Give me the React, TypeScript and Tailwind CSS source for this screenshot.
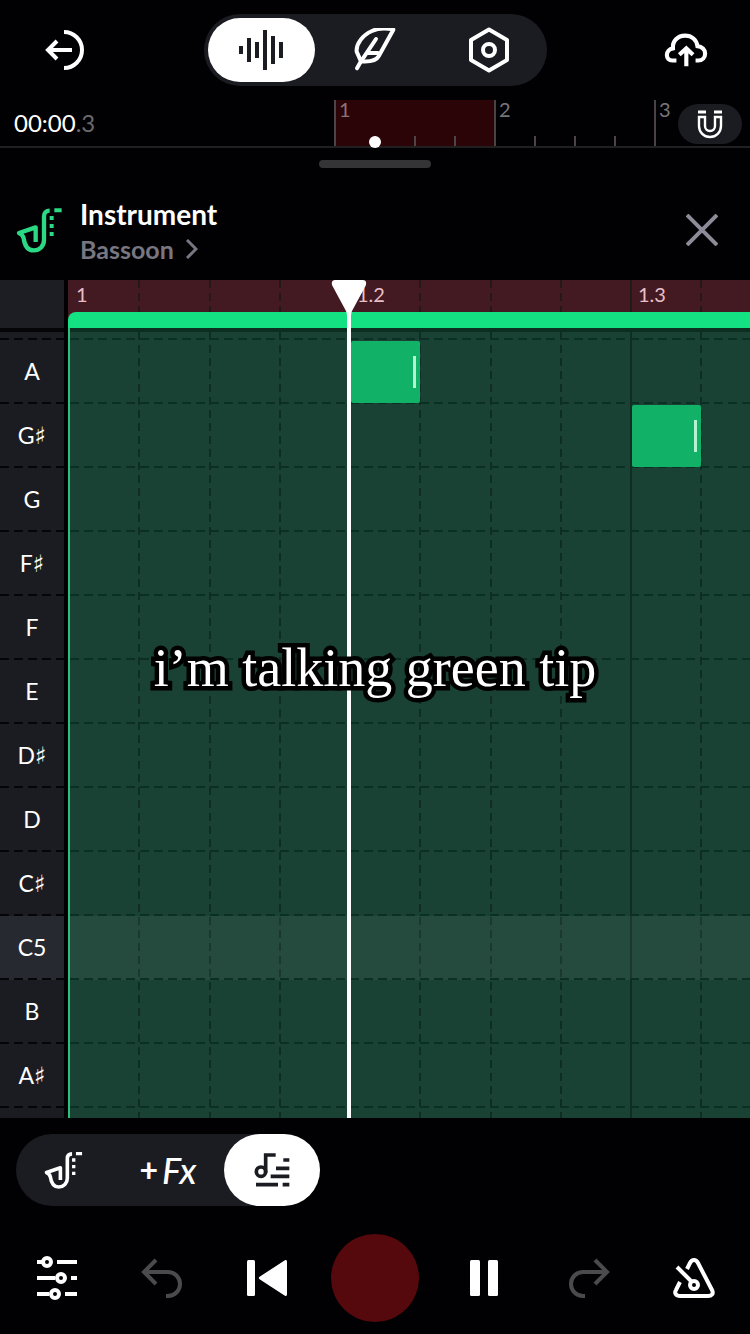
import { useState } from "react";

type Note = { beat: number };

type KeyRow = { name: string; octave?: boolean; notes?: Note[] };

const rows: KeyRow[] = [
  { name: "A", notes: [{ beat: 1 }] },
  { name: "G♯", notes: [{ beat: 2 }] },
  { name: "G" },
  { name: "F♯" },
  { name: "F" },
  { name: "E" },
  { name: "D♯" },
  { name: "D" },
  { name: "C♯" },
  { name: "C5", octave: true },
  { name: "B" },
  { name: "A♯" },
];

const BEAT_WIDTH = 281;
const beats = ["1", "1.2", "1.3"];

const keyDash =
  "h-0.5 bg-[repeating-linear-gradient(to_right,#050507_0_9px,transparent_9px_14px)]";
const laneDash =
  "h-0.5 bg-[repeating-linear-gradient(to_right,#0b2f22_0_9px,transparent_9px_14px)]";

function SaxIcon({ className }: { className?: string }) {
  return (
    <svg className={className} viewBox="18 18 144 144" fill="none" stroke="currentColor" strokeWidth="13" strokeLinejoin="round">
      <path d="M77 126V82L27 99c7 3 12 8 14 16 3 22 12 36 30 36s31-13 31-31V49c0-10 6-17 17-17" />
      <path d="M133 31h22M119 54h12M119 78h12M119 102h12" strokeWidth="12" />
    </svg>
  );
}

function WaveIcon() {
  return (
    <svg className="w-[46px] h-10" viewBox="0 0 46 40" stroke="currentColor" strokeWidth="4">
      <path d="M3 16v8M11 8v24M19 12v16M27 0v40M35 6v28M43 12v16" />
    </svg>
  );
}

function FeatherIcon() {
  return (
    <svg className="w-11 h-11" viewBox="39 39 132 132" fill="none" stroke="currentColor" strokeWidth="12" strokeLinecap="round" strokeLinejoin="round">
      <path d="M51 160l12-21" />
      <path d="M63 139L50 110c-2-24 18-50 46-62 18-8 42-9 64-4l-44 80c-7 13-27 17-53 15z" />
      <path d="M63 139l45-67M80 114h34" />
    </svg>
  );
}

function HexIcon() {
  return (
    <svg className="w-[42px] h-[46px]" viewBox="0 0 42 46" fill="none" stroke="currentColor" strokeWidth="4" strokeLinejoin="round">
      <path d="M21 2.5L39 13v20L21 43.5 3 33V13z" />
      <circle cx="21" cy="23" r="6" />
    </svg>
  );
}

function CloudIcon() {
  return (
    <svg className="w-[46px] h-9" viewBox="864 93 138 108" fill="none" stroke="currentColor" strokeWidth="13">
      <path d="M903 180h-13c-10 0-17-7-17-17 0-11 8-19 19-21-2-23 15-40 38-40 21 0 36 13 39 33 14 1 24 11 24 23 0 13-9 22-22 22h-8" />
      <path d="M934 198v-54M912 162l22-20 21 20" />
    </svg>
  );
}

function MagnetIcon() {
  return (
    <svg className="w-[26px] h-[30px]" viewBox="0 0 26 30" fill="none" stroke="currentColor" strokeWidth="2.4">
      <path d="M1 3h8M17 3h8" strokeWidth="3" />
      <path d="M2 8v9a11 11 0 0 0 22 0V8h-6v9a5 5 0 0 1-10 0V8z" />
    </svg>
  );
}

function NotesIcon() {
  return (
    <svg className="w-[37px] h-[34px]" viewBox="75 39 111 102" fill="none" stroke="currentColor" strokeWidth="11">
      <circle cx="96" cy="95" r="14" />
      <path d="M110 98V45h30M163 60h18M141 85h40M125 109h56M81 134h66M161 134h20" />
    </svg>
  );
}

function KeyLabel({ name }: { name: string }) {
  return (
    <span className="flex items-center">
      {name[0]}
      {name[1] === "♯" ? (
        <span className="font-['DejaVu_Sans',sans-serif] font-bold text-2xl leading-6 pt-0.5">♯</span>
      ) : (
        name.slice(1)
      )}
    </span>
  );
}

function Transport() {
  const [recording, setRecording] = useState(false);
  const btn = "flex-1 flex justify-center items-center h-[88px]";

  return (
    <footer className="flex items-center px-1 pt-7 pb-3">
      <button className={btn} aria-label="Mixer">
        <svg className="w-10 h-11" viewBox="0 0 40 44" fill="none" stroke="currentColor" strokeWidth="4">
          <path d="M0 6h5M20 6h20M0 22h18M34 22h6M0 38h12M28 38h12" />
          <circle cx="10" cy="6" r="4" />
          <circle cx="24" cy="22" r="4" />
          <circle cx="18" cy="38" r="4" />
        </svg>
      </button>
      <button className={`${btn} text-[#4b4b4d]`} aria-label="Undo">
        <svg className="w-[42px] h-10" viewBox="0 0 42 40" fill="none" stroke="currentColor" strokeWidth="4">
          <path d="M15 2L3 14l12 12M4 14h23a12 12 0 0 1 0 24h-2" />
        </svg>
      </button>
      <button className={btn} aria-label="Back to start">
        <svg className="w-10 h-9" viewBox="0 0 40 36" fill="currentColor">
          <rect width="8" height="36" rx="1.5" />
          <path d="M12.6 16.8L37.5.4Q40-1 40 2v32q0 3-2.500 1.600L12.600 19.200q-1.600-1.200 0-2.400z" />
        </svg>
      </button>
      <button
        className="w-[88px] h-[88px] mx-3 rounded-full bg-[#56090c]"
        aria-label="Record"
        aria-pressed={recording}
        onClick={() => setRecording(!recording)}
      />
      <button className={btn} aria-label="Pause">
        <svg className="w-7 h-9" viewBox="0 0 28 36" fill="currentColor">
          <rect width="10" height="36" rx="1.5" />
          <rect x="18" width="10" height="36" rx="1.5" />
        </svg>
      </button>
      <button className={`${btn} text-[#4b4b4d]`} aria-label="Redo">
        <svg className="w-[42px] h-10" viewBox="0 0 42 40" fill="none" stroke="currentColor" strokeWidth="4">
          <path d="M27 2l12 12-12 12M38 14H15a12 12 0 0 0 0 24h2" />
        </svg>
      </button>
      <button className={btn} aria-label="Metronome">
        <svg className="w-[42px] h-10" viewBox="0 0 42 40" fill="none" stroke="currentColor" strokeWidth="4">
          <path d="M14 11l3-6c2-4 6-4 8 0l14 27c2 4-.5 6-4 6H7c-4 0-6-3-4-6l4-8" />
          <path d="M4 9l15 15" />
          <circle cx="21" cy="27" r="4" />
        </svg>
      </button>
    </footer>
  );
}

export default function App() {
  const [tab, setTab] = useState("notes");
  const [view, setView] = useState("tracks");

  const viewBtn = (name: string) =>
    `flex items-center justify-center w-[107px] h-16 rounded-full ${view === name ? "bg-white text-[#1b1c21]" : ""}`;
  const tabBtn = (name: string) =>
    `flex items-center justify-center w-24 h-[72px] rounded-full ${tab === name ? "bg-white text-[#1b1c21]" : ""}`;

  return (
    <main className="bg-[#010103] text-white font-['Lato',sans-serif] overflow-hidden">
      <header className="flex items-center justify-between h-[100px] px-[42px]">
        <button className="w-11 flex justify-center" aria-label="Exit">
          <svg className="w-10 h-10" viewBox="0 0 40 40" fill="none" stroke="currentColor" strokeWidth="4">
            <path d="M20 2a18 18 0 0 1 0 36M28 20H4M13 11l-9 9 9 9" />
          </svg>
        </button>
        <nav className="flex justify-between w-[343px] p-1 rounded-full bg-[#1b1c21]">
          <button className={viewBtn("tracks")} onClick={() => setView("tracks")} aria-label="Tracks">
            <WaveIcon />
          </button>
          <button className={viewBtn("lyrics")} onClick={() => setView("lyrics")} aria-label="Lyrics">
            <FeatherIcon />
          </button>
          <button className={viewBtn("settings")} onClick={() => setView("settings")} aria-label="Settings">
            <HexIcon />
          </button>
        </nav>
        <button className="w-11 flex justify-center" aria-label="Save">
          <CloudIcon />
        </button>
      </header>

      <div className="relative flex h-12 border-b-2 border-[#202023] text-xl leading-[18px]">
        <div className="w-[334px] shrink-0 flex items-center pl-3.5 text-2xl">
          00:00<span className="text-[#69696d]">.3</span>
        </div>
        {[1, 2, 3].map((bar) => (
          <div
            key={bar}
            className={`relative w-40 shrink-0 flex flex-col justify-between border-l-2 pl-[3px] ${
              bar === 1 ? "bg-[#2b0407] border-[#4e4447] text-[#8d7276]" : "border-[#4a4346] text-[#77777b]"
            }`}
          >
            {bar}
            {bar < 3 && (
              <div className="flex gap-[38px] pl-[35px]">
                <span className="w-0.5 h-2.5 bg-[#4e4447]" />
                <span className="w-0.5 h-2.5 bg-[#4e4447]" />
                <span className="w-0.5 h-2.5 bg-[#4e4447]" />
              </div>
            )}
            {bar === 1 && <span className="absolute left-[33px] -bottom-0.5 size-3 rounded-full bg-white" />}
          </div>
        ))}
        <button
          className="absolute right-2 top-1 w-16 h-10 rounded-full bg-[#1b1c21] flex items-center justify-center"
          aria-label="Snap to grid"
        >
          <MagnetIcon />
        </button>
      </div>

      <div className="flex justify-center pt-3 pb-3">
        <span className="w-28 h-2 rounded-full bg-[#343437]" />
      </div>

      <div className="flex items-center h-[100px] pl-4 pr-8">
        <SaxIcon className="w-12 h-12 text-[#2bd884]" />
        <div className="flex-1 pl-4 pt-0.5">
          <h1 className="text-[28px] leading-9 font-bold">Instrument</h1>
          <button className="flex items-center text-[25px] leading-[34px] font-bold text-[#777681]">
            Bassoon
            <svg className="w-3 h-5 ml-3" viewBox="0 0 12 20" fill="none" stroke="currentColor" strokeWidth="3">
              <path d="M1 1l9 9-9 9" />
            </svg>
          </button>
        </div>
        <button aria-label="Close" className="text-[#8d8b98]">
          <svg className="w-8 h-8" viewBox="0 0 32 32" stroke="currentColor" strokeWidth="4">
            <path d="M1 1l30 30M31 1L1 31" />
          </svg>
        </button>
      </div>

      <section className="relative flex">
        <div className="w-16 mr-1 shrink-0 bg-[#1b1c21]">
          <div className="h-12 bg-[#1c1e23]" />
          <div className="h-3 border-t-4 border-[#050507] flex flex-col justify-end">
            <div className={keyDash} />
          </div>
          {rows.map((row) => (
            <div key={row.name} className={`h-16 flex flex-col ${row.octave ? "bg-[#272931]" : ""}`}>
              <div className="flex-1 flex items-center justify-center text-[23px]">
                <KeyLabel name={row.name} />
              </div>
              <div className={keyDash} />
            </div>
          ))}
          <div className="h-2.5" />
        </div>

        <div className="relative flex-1 min-w-0 overflow-hidden bg-[#194234]">
          <div className="flex h-8 bg-[#431a22] text-xl leading-7 text-[#e9bfc6]">
            {beats.map((beat) => (
              <span key={beat} className="w-[281px] shrink-0 pl-2">
                {beat}
              </span>
            ))}
          </div>
          {/* step lines, solid on the beat */}
          <div className="absolute inset-0 flex">
            {beats.map((beat, b) => (
              <div key={beat} className="w-[281px] shrink-0 grid grid-cols-4">
                {[0, 1, 2, 3].map((step) => (
                  <span
                    key={step}
                    className={
                      step === 0
                        ? `w-0.5 ${b === 0 ? "" : "bg-[#05180f]/50"}`
                        : "w-0.5 bg-[repeating-linear-gradient(to_bottom,#05180f80_0_8px,transparent_8px_13px)]"
                    }
                  />
                ))}
              </div>
            ))}
          </div>
          <div className="relative bg-[#431a22]">
            <div className="h-4 rounded-tl-lg bg-[#14e182]" />
          </div>
          <div className="relative border-l-2 border-[#2fbf7c]">
            <div className="h-3 border-t-4 border-[#0d2f21] flex flex-col justify-end">
              <div className={laneDash} />
            </div>
            {rows.map((row) => (
              <div key={row.name} className={`relative h-16 flex flex-col justify-end ${row.octave ? "bg-white/5" : ""}`}>
                <div className={laneDash} />
                {row.notes?.map((note) => (
                  <div
                    key={note.beat}
                    className="absolute top-px w-[69px] h-[62px] rounded-xs bg-[#11b168] flex items-center justify-end pr-1"
                    style={{ left: note.beat * BEAT_WIDTH }}
                  >
                    <span className="w-[3px] h-8 bg-[#b5f2d0]" />
                  </div>
                ))}
              </div>
            ))}
            <div className="h-2.5" />
          </div>
          <div className="absolute top-0 bottom-0 left-[281px] -translate-x-1/2 flex flex-col items-center">
            <svg className="w-9 h-9 shrink-0" viewBox="0 0 36 36" fill="white">
              <path d="M4 0h28c3 0 4 3 2.500 6L21 31q-1 2-1 5h-4q0-3-1-5L1.500 6C0 3 1 0 4 0z" />
            </svg>
            <span className="w-1 flex-1 bg-white" />
          </div>
        </div>

        <p className="absolute inset-x-0 top-[356px] text-center text-[54px] leading-[64px] font-['Liberation_Serif',serif] [-webkit-text-stroke:9px_black] [paint-order:stroke_fill] [stroke-linejoin:round]">
          i’m talking green tip
        </p>
      </section>

      <div className="px-4 pt-4">
        <nav className="flex justify-between w-[304px] rounded-full bg-[#1b1c21]">
          <button className={tabBtn("instrument")} onClick={() => setTab("instrument")} aria-label="Instrument">
            <SaxIcon className="w-10 h-10" />
          </button>
          <button className={`${tabBtn("fx")} gap-1`} onClick={() => setTab("fx")}>
            <span className="text-[32px] font-bold">+</span>
            <span className="text-4xl italic font-medium">Fx</span>
          </button>
          <button className={tabBtn("notes")} onClick={() => setTab("notes")} aria-label="Note editor">
            <NotesIcon />
          </button>
        </nav>
      </div>

      <Transport />
    </main>
  );
}
